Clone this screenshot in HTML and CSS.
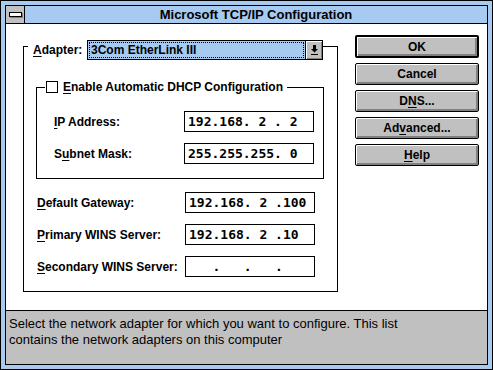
FILE: index.html
```html
<!DOCTYPE html>
<html lang="en">
<head>
    <meta charset="UTF-8">
    <title>Microsoft TCP/IP Configuration</title>
    <link rel="stylesheet" href="styles.css">
</head>
<body>
    <div class="window">
        <div class="frame">
            <div class="titlebar">
                <div class="sysmenu"><span class="sysbar"></span></div>
                <div class="title">Microsoft TCP/IP Configuration</div>
            </div>

            <div class="client">
                <div class="group group-adapter">
                    <div class="legend legend-adapter">
                        <span class="legend-label"><u>A</u>dapter:</span>
                        <div class="combo">
                            <div class="combo-text">3Com EtherLink III</div>
                            <div class="combo-btn">
                                <svg width="7" height="10" viewBox="0 0 7 10">
                                    <rect x="2" y="0" width="3" height="4" fill="#000"/>
                                    <polygon points="0,4 7,4 3.5,7.5" fill="#000"/>
                                    <rect x="0" y="9" width="7" height="1" fill="#000"/>
                                </svg>
                            </div>
                        </div>
                    </div>

                    <div class="group group-dhcp">
                        <div class="legend legend-dhcp">
                            <span class="checkbox"></span>
                            <span class="legend-label"><u>E</u>nable Automatic DHCP Configuration</span>
                        </div>
                        <div class="fields fields-dhcp">
                            <div class="field">
                                <span class="field-label"><u>I</u>P Address:</span>
                                <div class="ipbox">192.168. 2 . 2</div>
                            </div>
                            <div class="field">
                                <span class="field-label">S<u>u</u>bnet Mask:</span>
                                <div class="ipbox">255.255.255. 0</div>
                            </div>
                        </div>
                    </div>

                    <div class="fields fields-outer">
                        <div class="field">
                            <span class="field-label"><u>D</u>efault Gateway:</span>
                            <div class="ipbox">192.168. 2 .100</div>
                        </div>
                        <div class="field">
                            <span class="field-label"><u>P</u>rimary WINS Server:</span>
                            <div class="ipbox">192.168. 2 .10</div>
                        </div>
                        <div class="field">
                            <span class="field-label"><u>S</u>econdary WINS Server:</span>
                            <div class="ipbox">   .   .   .</div>
                        </div>
                    </div>
                </div>

                <div class="buttons">
                    <div class="btn btn-default">OK</div>
                    <div class="btn">Cancel</div>
                    <div class="btn">D<u>N</u>S...</div>
                    <div class="btn">Ad<u>v</u>anced...</div>
                    <div class="btn"><u>H</u>elp</div>
                </div>
            </div>

            <div class="status">
                Select the network adapter for which you want to configure. This list<br>
                contains the network adapters on this computer
            </div>
        </div>
    </div>
</body>
</html>
```

FILE: styles.css
```css
* {
    margin: 0;
    padding: 0;
    box-sizing: border-box;
}
body {
    background-color: #ffffff;
    font-family: "Liberation Sans", Arial, sans-serif;
    font-size: 12px;
    color: #000;
}
u {
    text-decoration-thickness: 1px;
    text-underline-offset: 2px;
}

/* window frame */
.window {
    width: 493px;
    height: 370px;
    border: 1px solid #000;
    background-color: #a6caf0;
    padding: 4px;
}
.frame {
    height: 100%;
    border: 1px solid #000;
    background-color: #fff;
    display: flex;
    flex-direction: column;
}
.titlebar {
    display: flex;
    height: 18px;
    background-color: #a6caf0;
    border-bottom: 1px solid #000;
}
.sysmenu {
    width: 19px;
    background-color: #c0c0c0;
    border-right: 1px solid #000;
    display: flex;
    align-items: center;
    justify-content: center;
}
.sysbar {
    width: 13px;
    height: 5px;
    border: 1px solid #000;
    background-color: #fff;
    box-shadow: 1px 1px 0 #808080;
    margin-top: -1px;
}
.title {
    flex: 1;
    text-align: center;
    font-weight: bold;
    font-size: 13px;
    line-height: 17px;
}

/* client area */
.client {
    flex: 1;
    display: flex;
    align-items: flex-start;
}
.group {
    border: 1px solid #000;
}
.group-adapter {
    width: 315px;
    margin: 22px 0 0 17px;
    padding: 0 22px 14px 0;
}
.legend {
    display: flex;
    align-items: center;
    background-color: #fff;
    margin-top: -7px;
}
.legend-label {
    font-weight: bold;
}
.legend-adapter {
    margin-left: 4px;
    padding-left: 5px;
    width: 295px;
}
.legend-adapter .legend-label {
    width: 54px;
}
.combo {
    display: flex;
    width: 236px;
    height: 20px;
    border: 1px solid #000;
}
.combo-text {
    flex: 1;
    background-color: #a6caf0;
    font-weight: bold;
    line-height: 18px;
    padding-left: 3px;
    outline: 1px dotted #000;
    outline-offset: -2px;
}
.combo-btn {
    width: 17px;
    border-left: 1px solid #000;
    background-color: #c0c0c0;
    box-shadow: inset 1px 1px 0 #fff, inset -1px -1px 0 #808080;
    display: flex;
    align-items: center;
    justify-content: center;
}

.group-dhcp {
    width: 288px;
    margin: 27px 0 0 12px;
    padding: 0 9px 14px 17px;
}
.legend-dhcp {
    align-self: flex-start;
    width: max-content;
    margin-left: -9px;
    padding: 0 4px 0 1px;
    gap: 5px;
    height: 12px;
}
.checkbox {
    width: 12px;
    height: 12px;
    border: 1px solid #000;
    background-color: #fff;
}

.fields {
    display: flex;
    flex-direction: column;
    gap: 11px;
}
.fields-dhcp {
    margin-top: 18px;
}
.fields-outer {
    margin-top: 13px;
    padding-left: 13px;
}
.field {
    display: flex;
    align-items: center;
    justify-content: space-between;
    height: 21px;
}
.field-label {
    font-weight: bold;
}
.ipbox {
    width: 130px;
    height: 21px;
    border: 1px solid #000;
    padding-left: 3px;
    font-family: "DejaVu Sans Mono", "Liberation Mono", monospace;
    font-weight: bold;
    font-size: 13px;
    line-height: 19px;
    white-space: pre;
}

/* buttons */
.buttons {
    display: flex;
    flex-direction: column;
    gap: 5px;
    margin: 11px 0 0 17px;
}
.btn {
    width: 124px;
    height: 22px;
    border: 1px solid #000;
    border-radius: 2px;
    background-color: #c0c0c0;
    box-shadow: inset 1px 1px 0 #fff, inset -2px -2px 0 #808080;
    font-weight: bold;
    display: flex;
    align-items: center;
    justify-content: center;
}
.btn-default {
    border-width: 2px;
    height: 23px;
}

/* status bar */
.status {
    height: 54px;
    border-top: 1px solid #000;
    background-color: #c0c0c0;
    padding: 5px 0 0 3px;
    font-size: 13px;
    line-height: 16px;
}
```
